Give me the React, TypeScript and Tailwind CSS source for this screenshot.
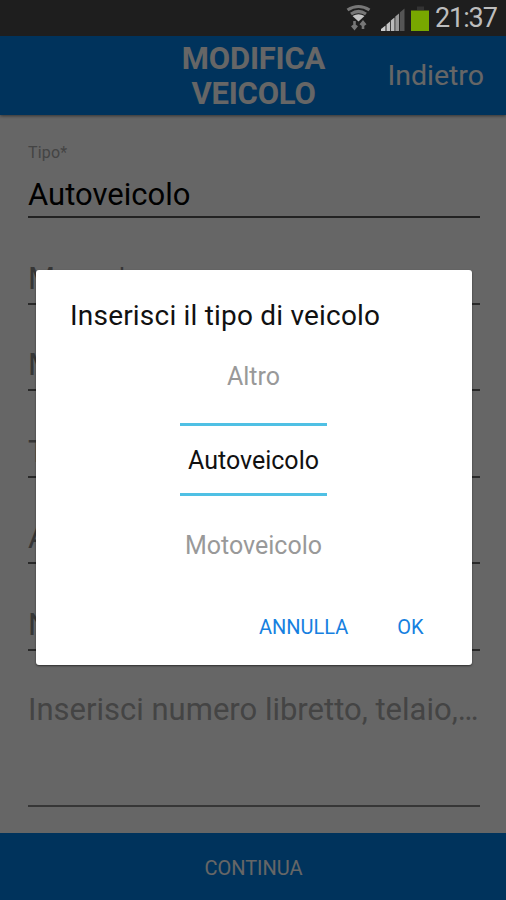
import { useState } from "react";

const TIPI = ["Altro", "Autoveicolo", "Motoveicolo"];

const CAMPI = ["Marca*", "Modello*", "Targa*", "Anno*", "Nazione*"];

function StatusBar() {
  return (
    <div className="relative z-20 flex h-9 shrink-0 justify-end bg-[#1e1e1e]">
      <svg width="92" height="36" viewBox="0 0 92 36" fill="none">
        {/* wifi */}
        <g stroke="#777" strokeWidth="3.2">
          <path d="M4.500 10Q15.500 3 26.500 10" />
          <path d="M8 14Q15.500 9 23 14" />
        </g>
        <path d="M9.500 16Q15.500 12.500 21.500 16L15.500 21.500Z" fill="#c4c4c4" />
        <path d="M11.500 21v7M9 25.500l2.500 3 2.500-3M20 29v-6M17.500 25l2.500-3 2.500 3" stroke="#777" strokeWidth="2.6" />
        {/* segnale */}
        <path d="M38 31v-2l4.500-3.500V31Z" fill="#ccc" />
        <path d="M43.500 31v-6.500l3.500-3V31Z" fill="#c4c4c4" />
        <path d="M47.800 31V20.500l3.700-3V31Z" fill="#bbb" />
        <path d="M52.300 31V16.500l3.700-3V31Z" fill="#999" />
        <path d="M56.800 31V12.500l4.700-4V31Z" fill="#555" />
        {/* batteria */}
        <path d="M74 6.500h7V10h-7Z" fill="#333" />
        <path d="M68 10.500h18V31H68Z" fill="#78a800" />
      </svg>
      <span className="w-[71px] whitespace-nowrap text-[27px] leading-[36px] tracking-[-1.1px] text-[#bdbdbd]">21:37</span>
    </div>
  );
}

function Campo({ label }: { label: string }) {
  return (
    <div className="flex h-[86.6px] items-end border-b-2 border-[#666] pb-1 text-[31px] leading-[40px] text-[#888]">
      {label}
    </div>
  );
}

interface TipoDialogProps {
  value: string;
  onChange: (value: string) => void;
}

function TipoDialog({ value, onChange }: TipoDialogProps) {
  return (
    <div className="absolute inset-0 z-10 bg-black/60 pl-9 pr-[34px] pt-[270px]">
      <div className="flex h-[395px] flex-col rounded-[3px] bg-white shadow-[0_1px_2px_rgba(0,0,0,0.55)]">
        <h2 className="ml-[34px] mt-[26px] h-[40px] whitespace-nowrap text-[28px] leading-[40px] tracking-[0.2px] text-[#111]">
          Inserisci il tipo di veicolo
        </h2>
        <div className="ml-36 mt-[20px] flex w-[147px] flex-col items-center text-[25px] leading-[40px]">
          {TIPI.map((tipo) => (
            <button
              key={tipo}
              type="button"
              onClick={() => onChange(tipo)}
              className={
                tipo === value
                  ? "mb-[29px] mt-[27px] h-[73px] w-full border-y-3 border-[#4fc0e4] text-[#111]"
                  : "h-[40px] text-[#999]"
              }>
              <span className="relative top-px">{tipo}</span>
            </button>
          ))}
        </div>
        <div className="mt-auto mb-[18px] flex gap-[49px] pl-[223px] text-[20px] leading-[40px] text-[#1680e0]">
          <button type="button">ANNULLA</button>
          <button type="button">OK</button>
        </div>
      </div>
    </div>
  );
}

export default function App() {
  const [tipo, setTipo] = useState("Autoveicolo");

  return (
    <div className="relative flex h-[900px] w-[506px] flex-col overflow-hidden bg-white font-['Roboto',sans-serif]">
      <StatusBar />

      <header className="grid h-[79px] shrink-0 grid-cols-3 items-center bg-[#0080e6] text-white shadow-[0_1px_3px_rgba(0,0,0,0.5)]">
        <h1 className="col-start-2 pl-px text-center text-[31px] font-bold leading-[35px] tracking-[-0.2px]">
          MODIFICA VEICOLO
        </h1>
        <button type="button" className="pr-[22px] pt-0.5 text-right text-[28.5px]">
          Indietro
        </button>
      </header>

      <main className="flex-1 pl-7 pr-[26px]">
        <div className="h-[103px] border-b-2 border-[#555] pt-[27px]">
          <div className="text-[16px] leading-[22px] tracking-[0.2px] text-[#aaa]">Tipo*</div>
          <div className="mt-[11px] text-[31px] leading-[40px] text-black">{tipo}</div>
        </div>
        {CAMPI.map((label) => (
          <Campo key={label} label={label} />
        ))}
        <div className="h-[156px] whitespace-nowrap border-b-2 border-[#888] pt-[39px] text-[31px] leading-[40px] text-[#aaa]">
          Inserisci numero libretto, telaio,…
        </div>
      </main>

      <footer className="flex h-[67px] shrink-0 items-center justify-center bg-[#0080e6] pl-px pt-0.5 text-[20px] text-white">
        CONTINUA
      </footer>

      <TipoDialog value={tipo} onChange={setTipo} />
    </div>
  );
}
